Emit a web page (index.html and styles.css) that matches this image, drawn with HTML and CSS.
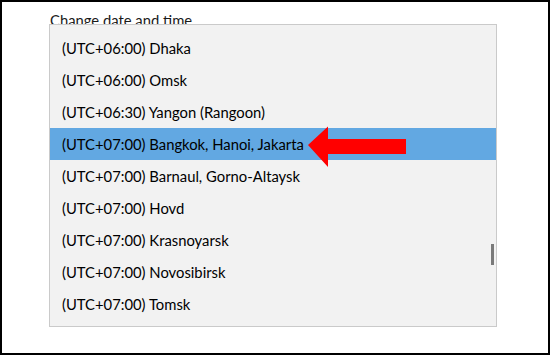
FILE: index.html
```html
<!DOCTYPE html>
<html lang="en">
<head>
    <meta charset="UTF-8">
    <meta name="viewport" content="width=device-width, initial-scale=1.0">
    <title>Time zone</title>
    <link rel="stylesheet" href="styles.css">
</head>
<body>
    <div class="frame">
        <div class="heading">Change date and time</div>
        <div class="dropdown">
            <div class="option">(UTC+06:00) Dhaka</div>
            <div class="option">(UTC+06:00) Omsk</div>
            <div class="option">(UTC+06:30) Yangon (Rangoon)</div>
            <div class="option selected">(UTC+07:00) Bangkok, Hanoi, Jakarta</div>
            <div class="option">(UTC+07:00) Barnaul, Gorno-Altaysk</div>
            <div class="option">(UTC+07:00) Hovd</div>
            <div class="option">(UTC+07:00) Krasnoyarsk</div>
            <div class="option">(UTC+07:00) Novosibirsk</div>
            <div class="option">(UTC+07:00) Tomsk</div>
            <div class="scroll-thumb"></div>
        </div>
        <svg class="arrow" width="100" height="44" viewBox="0 0 100 44">
            <polygon points="0,19 20,0.5 20,13 98,13 98,28 20,28 20,41" fill="#ff0000"/>
        </svg>
    </div>
</body>
</html>
```

FILE: styles.css
```css
body {
    margin: 0;
    font-family: 'Lato', 'Noto Sans', sans-serif;
    background: #fff;
    color: #000;
}
.frame {
    position: relative;
    box-sizing: border-box;
    width: 550px;
    height: 355px;
    border: 2px solid #000;
    padding: 8px 0 0 48px;
    overflow: hidden;
}
.heading {
    font-size: 14.8px;
    line-height: 20px;
    color: #1a1a1a;
}
.dropdown {
    position: absolute;
    left: 47px;
    top: 22px;
    width: 446px;
    padding: 7px 0 6px;
    background: #f2f2f2;
    border: 1px solid #cacaca;
}
.option {
    height: 32px;
    line-height: 32px;
    padding-left: 12px;
    font-size: 14.8px;
    white-space: nowrap;
}
.option.selected {
    background-color: #62a8e2;
}
.scroll-thumb {
    position: absolute;
    right: 2px;
    top: 219px;
    width: 3px;
    height: 21px;
    background: #7a7a7a;
}
.arrow {
    position: absolute;
    left: 306px;
    top: 124px;
}
```
